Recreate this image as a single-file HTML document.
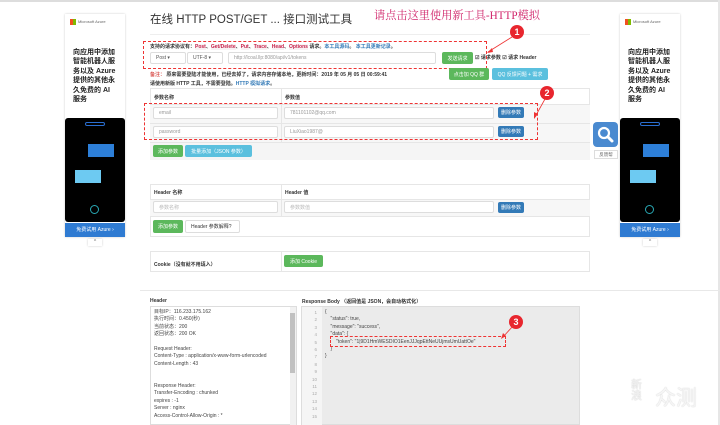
<!DOCTYPE html>
<html><head><meta charset="utf-8">
<style>
*{box-sizing:border-box;margin:0;padding:0}
body{width:720px;height:425px;overflow:hidden;background:#fff;font-family:"Liberation Sans","Noto Sans CJK SC",sans-serif;position:relative;color:#333}
.a{position:absolute}
.f{border:1px solid #ddd;background:#fff;border-radius:2px;font-size:5px;color:#999;padding:0 5px;display:flex;align-items:center}
.btn{position:absolute;color:#fff;font-size:5px;display:flex;align-items:center;justify-content:center;border-radius:2px}
.g{background:#5cb85c}.b{background:#5bc0de}.d{background:#337ab7}
.red{border:1px dashed #e33;position:absolute}
.circ{position:absolute;width:14px;height:14px;border-radius:50%;background:#e8262e;color:#fff;font-size:9px;font-weight:bold;text-align:center;line-height:14px}
.t{position:absolute;font-size:5px;font-weight:bold;color:#333}
.ad{position:absolute;width:60px;height:223px;background:#fff;box-shadow:0 0 2px #ccc}
.ad .txt{position:absolute;left:8px;top:34px;width:45px;font-size:7px;font-weight:bold;line-height:9.4px;color:#222}
.ad .ph{position:absolute;left:0;top:104px;width:60px;height:104px;background:#000;border-radius:3px}
.ad .bt{position:absolute;left:0;top:209px;width:60px;height:14px;background:#2f7bd2;color:#fff;font-size:5px;text-align:center;line-height:14px}
.ln{font-size:4.5px;color:#aaa;text-align:right;line-height:7.4px}
</style></head><body>
<div class="a" style="left:0;top:0;width:720px;height:2px;background:#ddd"></div>
<div class="a" style="left:718px;top:0;width:2px;height:425px;background:#e6e6e6"></div>

<!-- left ad -->
<div class="ad" style="left:65px;top:14px">
 <div class="a" style="left:5px;top:5px;width:6px;height:6px;background:linear-gradient(90deg,#f25022 50%,#7fba00 50%)"></div>
 <div class="a" style="left:13px;top:5px;font-size:4px;color:#666">Microsoft Azure</div>
 <div class="txt">向应用中添加智能机器人服务以及 Azure 提供的其他永久免费的 AI 服务</div>
 <div class="ph"><div class="a" style="left:20px;top:4px;width:20px;height:4px;border:1px solid #2a6ed0;border-radius:2px"></div>
 <div class="a" style="left:23px;top:26px;width:26px;height:13px;background:#2d7fd8"></div>
 <div class="a" style="left:10px;top:52px;width:26px;height:13px;background:#6dcaf2"></div>
 <div class="a" style="left:25px;top:87px;width:9px;height:9px;border:1px solid #29a9b5;border-radius:50%"></div></div>
 <div class="bt">免费试用 Azure ›</div>
</div>
<div class="a" style="left:88px;top:239px;width:14px;height:7px;background:#fff;box-shadow:0 0 2px #ccc;font-size:5px;text-align:center;color:#666">^</div>
<!-- right ad -->
<div class="ad" style="left:620px;top:14px">
 <div class="a" style="left:5px;top:5px;width:6px;height:6px;background:linear-gradient(90deg,#f25022 50%,#7fba00 50%)"></div>
 <div class="a" style="left:13px;top:5px;font-size:4px;color:#666">Microsoft Azure</div>
 <div class="txt">向应用中添加智能机器人服务以及 Azure 提供的其他永久免费的 AI 服务</div>
 <div class="ph"><div class="a" style="left:20px;top:4px;width:20px;height:4px;border:1px solid #2a6ed0;border-radius:2px"></div>
 <div class="a" style="left:23px;top:26px;width:26px;height:13px;background:#2d7fd8"></div>
 <div class="a" style="left:10px;top:52px;width:26px;height:13px;background:#6dcaf2"></div>
 <div class="a" style="left:25px;top:87px;width:9px;height:9px;border:1px solid #29a9b5;border-radius:50%"></div></div>
 <div class="bt">免费试用 Azure ›</div>
</div>
<div class="a" style="left:643px;top:239px;width:14px;height:7px;background:#fff;box-shadow:0 0 2px #ccc;font-size:5px;text-align:center;color:#666">^</div>

<!-- search -->
<div class="a" style="left:593px;top:122px;width:25px;height:25px;background:#4a8ad0;border-radius:4px">
<svg width="25" height="25"><circle cx="11" cy="11" r="5" fill="none" stroke="#fff" stroke-width="2.2"/><path d="M15 15 L19 19" stroke="#fff" stroke-width="3" stroke-linecap="round"/></svg></div>
<div class="a" style="left:594px;top:150px;width:24px;height:9px;border:1px solid #ddd;font-size:4.5px;color:#666;text-align:center;line-height:8px">反馈帮</div>

<div class="a" style="left:150px;top:11px;font-size:11.5px;color:#333">在线 HTTP POST/GET ... 接口测试工具</div>
<div class="a" style="left:374px;top:7px;font-size:11.2px;color:#d0246a;font-family:'Liberation Serif','Noto Serif CJK SC',serif">请点击这里使用新工具-HTTP模拟</div>
<div class="a" style="left:150px;top:34px;width:440px;height:1px;background:#eee"></div>

<div class="a" style="left:150px;top:43px;font-size:5px;font-weight:bold">支持的请求协议有：<span style="color:#c7254e;background:#f9f2f4">Post</span>、<span style="color:#c7254e;background:#f9f2f4">Get/Delete</span>、<span style="color:#c7254e;background:#f9f2f4">Put</span>、<span style="color:#c7254e;background:#f9f2f4">Trace</span>、<span style="color:#c7254e;background:#f9f2f4">Head</span>、<span style="color:#c7254e;background:#f9f2f4">Options</span> 请求。<span style="color:#337ab7">本工具源码</span>。 <span style="color:#337ab7">本工具更新记录</span>。</div>
<div class="a f" style="left:150px;top:52px;width:36px;height:12px;color:#555">Post ▾</div>
<div class="a f" style="left:187px;top:52px;width:36px;height:12px;color:#555">UTF-8 ▾</div>
<div class="a f" style="left:228px;top:52px;width:208px;height:12px">http://lcoal.llp:8080/api/v1/tokens</div>
<div class="btn g" style="left:442px;top:52px;width:31px;height:12px">发送请求</div>
<div class="a" style="left:475px;top:54px;font-size:5px;font-weight:bold">☑ 请求参数 ☑ 请求 Header</div>
<div class="red" style="left:143px;top:41px;width:344px;height:28px"></div>
<div class="circ" style="left:510px;top:25px">1</div>
<svg class="a" style="left:485px;top:36px" width="30" height="20"><path d="M27 1 L3 16" stroke="#e33" stroke-width="0.8"/><path d="M2 17 L7 12 L8 16Z" fill="#e33"/></svg>

<div class="a" style="left:150px;top:71px;font-size:5px;font-weight:bold"><span style="color:#d9534f">备注：</span> 原来需要登陆才能使用，已经去掉了，请求内容存储本地，更新时间：2019 年 05 月 05 日 00:59:41</div>
<div class="a" style="left:150px;top:80px;font-size:5px;font-weight:bold">请使用新版 HTTP 工具，不需要登陆。<span style="color:#337ab7">HTTP 模拟请求</span>。</div>
<div class="btn g" style="left:449px;top:68px;width:40px;height:12px">点击加 QQ 群</div>
<div class="btn b" style="left:492px;top:68px;width:56px;height:12px">QQ 反馈问题 + 需求</div>

<!-- param table -->
<div class="a" style="left:150px;top:88px;width:440px;height:72px;border:1px solid #e6e6e6"></div>
<div class="a" style="left:150px;top:104px;width:440px;height:38px;background:#f7f7f7"></div>
<div class="a" style="left:150px;top:142px;width:440px;height:18px;background:#f5f5f5;border-top:1px solid #e6e6e6"></div>
<div class="a" style="left:281px;top:88px;width:1px;height:54px;background:#e6e6e6"></div>
<div class="a" style="left:150px;top:104px;width:440px;height:1px;background:#e6e6e6"></div>
<div class="a" style="left:150px;top:123px;width:440px;height:1px;background:#e6e6e6"></div>
<div class="t" style="left:154px;top:94px">参数名称</div><div class="t" style="left:285px;top:94px">参数值</div>
<div class="a f" style="left:153px;top:107px;width:125px;height:12px">email</div>
<div class="a f" style="left:284px;top:107px;width:210px;height:12px">781101102@qq.com</div>
<div class="btn d" style="left:498px;top:107px;width:26px;height:11px">删除参数</div>
<div class="a f" style="left:153px;top:126px;width:125px;height:12px">password</div>
<div class="a f" style="left:284px;top:126px;width:210px;height:12px">LiuXiao1987@</div>
<div class="btn d" style="left:498px;top:126px;width:26px;height:11px">删除参数</div>
<div class="red" style="left:144px;top:103px;width:394px;height:37px"></div>
<div class="circ" style="left:540px;top:86px">2</div>
<svg class="a" style="left:532px;top:98px" width="15" height="22"><path d="M13 1 L3 19" stroke="#e33" stroke-width="0.8"/><path d="M2 21 L2 14 L6 16Z" fill="#e33"/></svg>
<div class="btn g" style="left:153px;top:145px;width:30px;height:12px">添加参数</div>
<div class="btn b" style="left:185px;top:145px;width:67px;height:12px">批量添加（JSON 参数）</div>

<!-- header table -->
<div class="a" style="left:150px;top:184px;width:440px;height:53px;border:1px solid #e6e6e6"></div>
<div class="a" style="left:150px;top:199px;width:440px;height:18px;background:#f7f7f7;border-top:1px solid #e6e6e6;border-bottom:1px solid #e6e6e6"></div>
<div class="a" style="left:281px;top:184px;width:1px;height:33px;background:#e6e6e6"></div>
<div class="t" style="left:154px;top:189px">Header 名称</div><div class="t" style="left:285px;top:189px">Header 值</div>
<div class="a f" style="left:153px;top:201px;width:125px;height:12px;color:#bbb">参数名称</div>
<div class="a f" style="left:284px;top:201px;width:210px;height:12px;color:#bbb">参数数值</div>
<div class="btn d" style="left:498px;top:202px;width:26px;height:11px">删除参数</div>
<div class="btn g" style="left:153px;top:220px;width:30px;height:13px">添加参数</div>
<div class="a f" style="left:185px;top:220px;width:55px;height:13px;color:#333">Header 参数解释?</div>

<!-- cookie -->
<div class="a" style="left:150px;top:251px;width:440px;height:21px;border:1px solid #e6e6e6"></div>
<div class="a" style="left:281px;top:251px;width:1px;height:21px;background:#e6e6e6"></div>
<div class="t" style="left:154px;top:261px">Cookie（没有就不用填入）</div>
<div class="btn g" style="left:284px;top:255px;width:39px;height:12px">添加 Cookie</div>

<!-- bottom -->
<div class="a" style="left:140px;top:290px;width:580px;height:1px;background:#e8e8e8"></div>
<div class="t" style="left:150px;top:298px">Header</div>
<div class="t" style="left:302px;top:298px">Response Body （返回值是 JSON，会自动格式化）</div>
<div class="a" style="left:150px;top:306px;width:147px;height:119px;background:#fff;border:1px solid #ddd;font-size:5px;line-height:7.4px;padding:2px 3px;color:#444">
目标IP：116.233.175.162<br>执行时间：0.450(秒)<br>当前状态：200<br>返回状态：200 OK<br><br>Request Header:<br>Content-Type : application/x-www-form-urlencoded<br>Content-Length : 43<br><br><br>Response Header:<br>Transfer-Encoding : chunked<br>expires : -1<br>Server : nginx<br>Access-Control-Allow-Origin : *</div>
<div class="a" style="left:290px;top:307px;width:6px;height:118px;background:#f1f1f1"></div>
<div class="a" style="left:290px;top:313px;width:5px;height:60px;background:#c1c1c1"></div>
<div class="a" style="left:301px;top:306px;width:279px;height:119px;background:#ebebeb;border:1px solid #ddd"></div>
<div class="a" style="left:302px;top:307px;width:20px;height:118px;background:#f5f5f5"></div>
<div class="a ln" style="left:302px;top:309px;width:15px">1<br>2<br>3<br>4<br>5<br>6<br>7<br>8<br>9<br>10<br>11<br>12<br>13<br>14<br>15</div>
<div class="a" style="left:325px;top:309px;font-size:5px;line-height:7.4px;color:#444;white-space:pre">{
    "status": true,
    "message": "success",
    "data": {
        "token": "1|9D1HmWESDIO1EenJJJqpEttNeUUjmsUmUattOe"
    }
}</div>
<div class="red" style="left:330px;top:336px;width:176px;height:11px"></div>
<div class="circ" style="left:509px;top:315px">3</div>
<svg class="a" style="left:500px;top:325px" width="15" height="15"><path d="M13 1 L3 12" stroke="#e33" stroke-width="0.8"/><path d="M1 14 L3 8 L6 11Z" fill="#e33"/></svg>

<div class="a" style="left:631px;top:380px;font-size:11px;color:#f2f2f2;line-height:11px;text-shadow:0 0 1px #bbb">新<br>浪</div>
<div class="a" style="left:655px;top:382px;font-size:21px;color:#f6f6f6;text-shadow:0 0 1px #bbb">众测</div>
</body></html>
